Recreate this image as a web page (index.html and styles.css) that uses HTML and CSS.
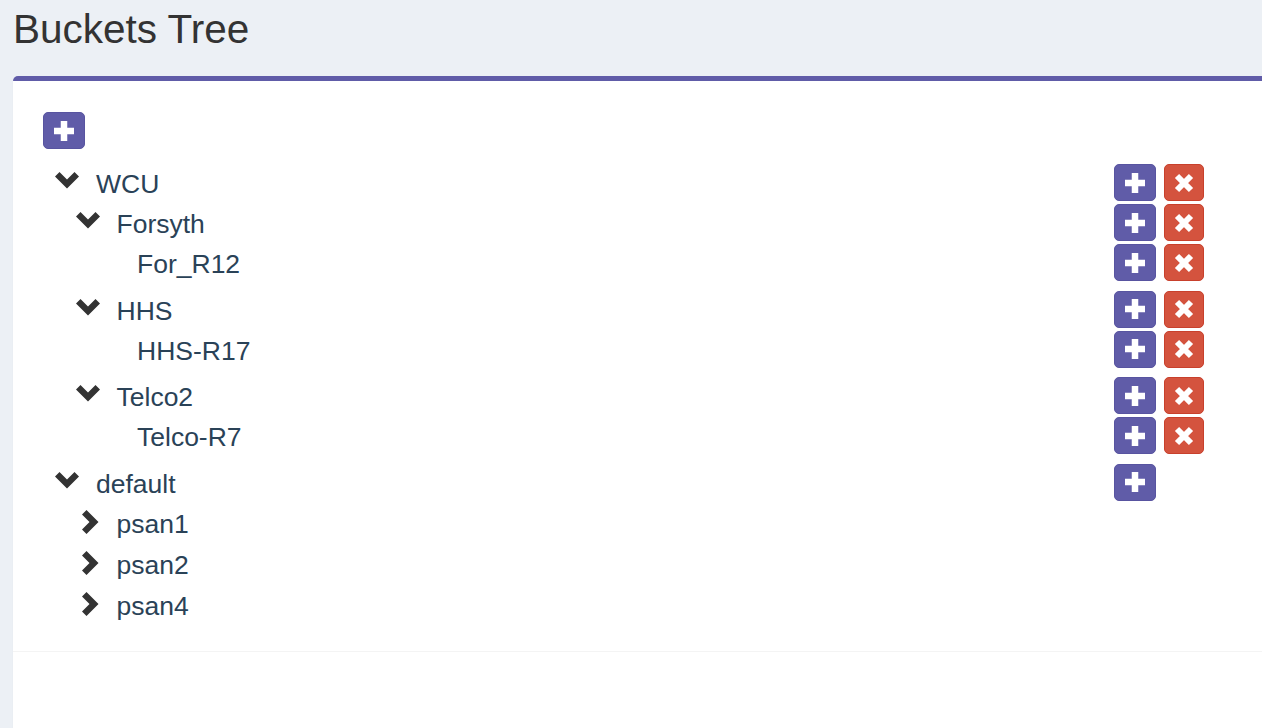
FILE: index.html
```html
<!DOCTYPE html>
<html lang="en">
<head>
  <meta charset="UTF-8" />
  <meta name="viewport" content="width=device-width, initial-scale=1" />
  <title>Buckets Tree</title>
  <link rel="stylesheet" href="styles.css">
</head>
<body>

  <section class="content-header">
    <h1>Buckets Tree</h1>
  </section>

  <div class="box">
    <div class="box-body">
      <button class="btn btn-add" title="Add bucket">
        <svg class="icon" viewBox="0 0 20 20"><path d="M6.75 0h6.5v6.75H20v6.5h-6.75V20h-6.5v-6.75H0v-6.5h6.75z"/></svg>
      </button>

      <ul class="tree">
        <li>
          <div class="node-row">
            <span class="toggle"><svg class="chev-down" viewBox="0 0 24 17"><path d="M0 4.5L4.5 0 12 7.5 19.5 0 24 4.5 12 16.5z"/></svg></span>
            <span class="node-title">WCU</span>
            <div class="node-actions">
              <button class="btn btn-add"><svg class="icon" viewBox="0 0 20 20"><path d="M6.75 0h6.5v6.75H20v6.5h-6.75V20h-6.5v-6.75H0v-6.5h6.75z"/></svg></button>
              <button class="btn btn-remove"><svg class="icon-x" viewBox="0 0 18 18"><path d="M2 2L16 16M16 2L2 16"/></svg></button>
            </div>
          </div>
          <ul class="tree-children">
            <li>
              <div class="node-row">
                <span class="toggle"><svg class="chev-down" viewBox="0 0 24 17"><path d="M0 4.5L4.5 0 12 7.5 19.5 0 24 4.5 12 16.5z"/></svg></span>
                <span class="node-title">Forsyth</span>
                <div class="node-actions">
                  <button class="btn btn-add"><svg class="icon" viewBox="0 0 20 20"><path d="M6.75 0h6.5v6.75H20v6.5h-6.75V20h-6.5v-6.75H0v-6.5h6.75z"/></svg></button>
                  <button class="btn btn-remove"><svg class="icon-x" viewBox="0 0 18 18"><path d="M2 2L16 16M16 2L2 16"/></svg></button>
                </div>
              </div>
              <ul class="tree-children">
                <li class="leaf">
                  <div class="node-row">
                    <span class="toggle"></span>
                    <span class="node-title">For_R12</span>
                    <div class="node-actions">
                      <button class="btn btn-add"><svg class="icon" viewBox="0 0 20 20"><path d="M6.75 0h6.5v6.75H20v6.5h-6.75V20h-6.5v-6.75H0v-6.5h6.75z"/></svg></button>
                      <button class="btn btn-remove"><svg class="icon-x" viewBox="0 0 18 18"><path d="M2 2L16 16M16 2L2 16"/></svg></button>
                    </div>
                  </div>
                </li>
              </ul>
            </li>
            <li>
              <div class="node-row">
                <span class="toggle"><svg class="chev-down" viewBox="0 0 24 17"><path d="M0 4.5L4.5 0 12 7.5 19.5 0 24 4.5 12 16.5z"/></svg></span>
                <span class="node-title">HHS</span>
                <div class="node-actions">
                  <button class="btn btn-add"><svg class="icon" viewBox="0 0 20 20"><path d="M6.75 0h6.5v6.75H20v6.5h-6.75V20h-6.5v-6.75H0v-6.5h6.75z"/></svg></button>
                  <button class="btn btn-remove"><svg class="icon-x" viewBox="0 0 18 18"><path d="M2 2L16 16M16 2L2 16"/></svg></button>
                </div>
              </div>
              <ul class="tree-children">
                <li class="leaf">
                  <div class="node-row">
                    <span class="toggle"></span>
                    <span class="node-title">HHS-R17</span>
                    <div class="node-actions">
                      <button class="btn btn-add"><svg class="icon" viewBox="0 0 20 20"><path d="M6.75 0h6.5v6.75H20v6.5h-6.75V20h-6.5v-6.75H0v-6.5h6.75z"/></svg></button>
                      <button class="btn btn-remove"><svg class="icon-x" viewBox="0 0 18 18"><path d="M2 2L16 16M16 2L2 16"/></svg></button>
                    </div>
                  </div>
                </li>
              </ul>
            </li>
            <li>
              <div class="node-row">
                <span class="toggle"><svg class="chev-down" viewBox="0 0 24 17"><path d="M0 4.5L4.5 0 12 7.5 19.5 0 24 4.5 12 16.5z"/></svg></span>
                <span class="node-title">Telco2</span>
                <div class="node-actions">
                  <button class="btn btn-add"><svg class="icon" viewBox="0 0 20 20"><path d="M6.75 0h6.5v6.75H20v6.5h-6.75V20h-6.5v-6.75H0v-6.5h6.75z"/></svg></button>
                  <button class="btn btn-remove"><svg class="icon-x" viewBox="0 0 18 18"><path d="M2 2L16 16M16 2L2 16"/></svg></button>
                </div>
              </div>
              <ul class="tree-children">
                <li class="leaf">
                  <div class="node-row">
                    <span class="toggle"></span>
                    <span class="node-title">Telco-R7</span>
                    <div class="node-actions">
                      <button class="btn btn-add"><svg class="icon" viewBox="0 0 20 20"><path d="M6.75 0h6.5v6.75H20v6.5h-6.75V20h-6.5v-6.75H0v-6.5h6.75z"/></svg></button>
                      <button class="btn btn-remove"><svg class="icon-x" viewBox="0 0 18 18"><path d="M2 2L16 16M16 2L2 16"/></svg></button>
                    </div>
                  </div>
                </li>
              </ul>
            </li>
          </ul>
        </li>
        <li>
          <div class="node-row">
            <span class="toggle"><svg class="chev-down" viewBox="0 0 24 17"><path d="M0 4.5L4.5 0 12 7.5 19.5 0 24 4.5 12 16.5z"/></svg></span>
            <span class="node-title">default</span>
            <div class="node-actions">
              <button class="btn btn-add"><svg class="icon" viewBox="0 0 20 20"><path d="M6.75 0h6.5v6.75H20v6.5h-6.75V20h-6.5v-6.75H0v-6.5h6.75z"/></svg></button>
            </div>
          </div>
          <ul class="tree-children">
            <li class="collapsed">
              <div class="node-row">
                <span class="toggle"><svg class="chev-right" viewBox="0 0 17 24"><path d="M4.5 0L16.5 12 4.5 24 0 19.5 7.5 12 0 4.5z"/></svg></span>
                <span class="node-title">psan1</span>
              </div>
            </li>
            <li class="collapsed">
              <div class="node-row">
                <span class="toggle"><svg class="chev-right" viewBox="0 0 17 24"><path d="M4.5 0L16.5 12 4.5 24 0 19.5 7.5 12 0 4.5z"/></svg></span>
                <span class="node-title">psan2</span>
              </div>
            </li>
            <li class="collapsed">
              <div class="node-row">
                <span class="toggle"><svg class="chev-right" viewBox="0 0 17 24"><path d="M4.5 0L16.5 12 4.5 24 0 19.5 7.5 12 0 4.5z"/></svg></span>
                <span class="node-title">psan4</span>
              </div>
            </li>
          </ul>
        </li>
      </ul>
    </div>
    <div class="box-footer"></div>
  </div>

</body>
</html>
```

FILE: styles.css
```css
html, body {
  overflow: hidden;
}
body {
  margin: 0;
  font-family: 'Liberation Sans', Arial, sans-serif;
  background-color: #ecf0f5;
  color: #333;
}
.content-header {
  padding: 7px 13px 25px;
}
.content-header h1 {
  margin: 0;
  font-size: 40.5px;
  line-height: 44px;
  font-weight: normal;
  color: #333;
}
.box {
  margin-left: 13px;
  background: white;
  border-top: 5px solid #605ca8;
  border-top-left-radius: 5px;
  box-shadow: 0 1px 1px rgba(0,0,0,0.1);
}
.box-body {
  padding: 31px 58px 24px 30px;
}
.box-footer {
  height: 76px;
  border-top: 1px solid #f4f4f4;
}
.btn {
  display: inline-flex;
  align-items: center;
  justify-content: center;
  width: 42px;
  height: 37px;
  padding: 0;
  border-radius: 5px;
  cursor: pointer;
}
.btn-add {
  background-color: #605ca8;
  border: 1px solid #5854a0;
}
.btn-remove {
  width: 41px;
  background-color: #d4533e;
  border: 1px solid #c8402c;
}
.icon {
  width: 20px;
  height: 20px;
  fill: white;
}
.icon-x {
  width: 18px;
  height: 18px;
  fill: none;
  stroke: white;
  stroke-width: 6;
  overflow: visible;
}
.tree, .tree-children {
  list-style: none;
  margin: 0;
  padding: 0;
}
.tree {
  margin-top: 15px;
}
.tree-children {
  padding-left: 20.5px;
}
.node-row {
  display: flex;
  align-items: flex-start;
  height: 40px;
  padding-left: 12px;
}
.leaf > .node-row {
  padding-bottom: 6.5px;
}
.collapsed > .node-row {
  height: 41px;
}
.toggle {
  flex: 0 0 41px;
  height: 40px;
}
.chev-down {
  display: block;
  width: 24px;
  height: 17px;
  margin-top: 8px;
  fill: #333;
}
.chev-right {
  display: block;
  width: 17px;
  height: 24px;
  margin: 6px 0 0 6.5px;
  fill: #333;
}
.node-title {
  font-size: 26.5px;
  line-height: 40px;
  color: #2a4257;
}
.node-actions {
  margin-left: auto;
  width: 90px;
  display: flex;
  gap: 8px;
}
```
